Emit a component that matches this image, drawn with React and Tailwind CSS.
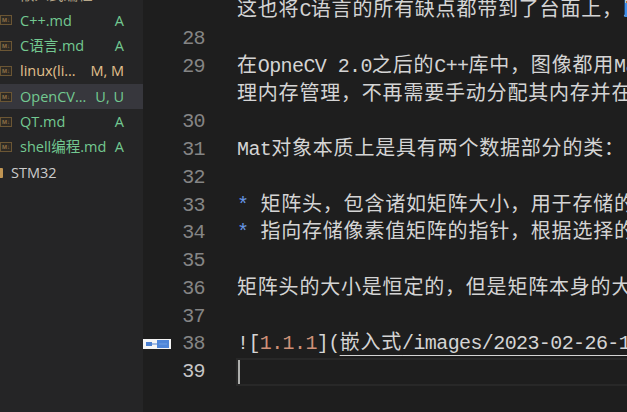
import React from "react";

const CJK = /([\u2E80-\u9FFF\u3000-\u303F\uFF00-\uFFEF]+)/;

function T({ s }) {
  const parts = s.split(CJK).filter((p) => p.length > 0);
  return (
    <>
      {parts.map((p, i) =>
        CJK.test(p) ? (
          <span key={i} className="tracking-[0.8px]">{p}</span>
        ) : (
          <span key={i} className="tracking-[-0.6px] whitespace-pre">
            {p}
          </span>
        )
      )}
    </>
  );
}

function MdIcon() {
  return (
    <span className="flex h-[10px] w-[12px] shrink-0 items-center justify-center border border-[#6b5634] bg-[#2e2a24] text-[6px] leading-none font-bold text-[#8d7046] font-['Liberation_Sans',sans-serif]">
      M↓
    </span>
  );
}

function FileRow({ name, badge, color, selected }) {
  return (
    <div
      className={
        "flex h-[25.4px] items-center pr-[19px] " +
        (selected ? "bg-[#37373d]" : "")
      }
    >
      <MdIcon />
      <span className="ml-[8px] min-w-0 flex-1 truncate" style={{ color }}>
        {name}
      </span>
      <span className="ml-[6px] shrink-0" style={{ color }}>
        {badge}
      </span>
    </div>
  );
}

function Line({ num, children, active, icon }) {
  return (
    <div className="flex h-[27.75px] items-center">
      <div
        className={
          "relative w-[62px] shrink-0 text-right tracking-[-0.6px] " +
          (active ? "text-[#c6c6c6]" : "text-[#858585]")
        }
      >
        {icon && (
          <div className="absolute left-0 top-1/2 h-[10px] w-[28px] -translate-y-1/2">
            <svg width="28" height="10" viewBox="0 0 28 10">
              <rect x="0" y="0" width="28" height="10" fill="#f4f4f4" />
              <rect x="3" y="3" width="6" height="4" fill="#4a7fd0" />
              <line x1="9" y1="5" x2="14" y2="5" stroke="#4a7fd0" strokeWidth="1" />
              <rect x="14" y="1" width="12" height="8" fill="#4f86d9" />
              <line x1="16" y1="5" x2="24" y2="5" stroke="#7aa6e6" strokeWidth="0.8" />
            </svg>
          </div>
        )}
        {num}
      </div>
      <div className="ml-[32px] whitespace-nowrap text-[#d4d4d4]">{children}</div>
    </div>
  );
}

export default function App() {
  return (
    <div className="flex h-[412px] w-[627px] overflow-hidden bg-[#1e1e1e]">
      {/* Sidebar */}
      <aside className="w-[143px] shrink-0 overflow-hidden bg-[#252526] font-['Open_Sans','Noto_Sans_CJK_SC',sans-serif] text-[14.5px]">
        <div className="mt-[-17.7px] flex flex-col">
          <FileRow name="嵌入式编程.md" badge="A" color="#b8a88a" />
          <FileRow name="C++.md" badge="A" color="#73c991" />
          <FileRow name="C语言.md" badge="A" color="#73c991" />
          <FileRow name="linux(lin…" badge="M, M" color="#e2c08d" />
          <FileRow name="OpenCV.…" badge="U, U" color="#73c991" selected />
          <FileRow name="QT.md" badge="A" color="#73c991" />
          <FileRow name="shell编程.md" badge="A" color="#73c991" />
          <div className="flex h-[25.4px] items-center">
            <span className="ml-[-9px] h-[10px] w-[12px] shrink-0 rounded-[1px] bg-[#c09553]" />
            <span className="ml-[8px] text-[#cccccc]">STM32</span>
          </div>
        </div>
      </aside>

      {/* Editor */}
      <main className="relative min-w-0 flex-1 overflow-hidden font-['Liberation_Mono','Noto_Sans_CJK_SC',monospace] text-[20px]">
        <div className="mt-[-2.6px] flex flex-col">
          <Line num="">
            <T s="这也将C语言的所有缺点都带到了台面上，即必须手动管理内存。" />
          </Line>
          <Line num="28" />
          <Line num="29">
            <T s="在OpneCV 2.0之后的C++库中，图像都用Mat类来存储，Mat类可以自动管" />
          </Line>
          <Line num="">
            <T s="理内存管理，不再需要手动分配其内存并在不需要时释放。" />
          </Line>
          <Line num="30" />
          <Line num="31">
            <T s="Mat对象本质上是具有两个数据部分的类：" />
          </Line>
          <Line num="32" />
          <Line num="33">
            <span className="text-[#6796e6]">*</span>
            <T s=" 矩阵头，包含诸如矩阵大小，用于存储的方法，矩阵存储的地址等信息；" />
          </Line>
          <Line num="34">
            <span className="text-[#6796e6]">*</span>
            <T s=" 指向存储像素值矩阵的指针，根据选择的存储方法包含像素值。" />
          </Line>
          <Line num="35" />
          <Line num="36">
            <T s="矩阵头的大小是恒定的，但是矩阵本身的大小因图像的不同而不同。" />
          </Line>
          <Line num="37" />
          <Line num="38" icon>
            <span className="tracking-[-0.6px]">![</span>
            <span className="tracking-[-0.6px] text-[#ce9178]">1.1.1</span>
            <span className="tracking-[-0.6px]">](</span>
            <span className="underline decoration-[#d4d4d4] decoration-1 underline-offset-[6px]">
              <T s="嵌入式/images/2023-02-26-15-30-12.png" />
            </span>
            <span className="tracking-[-0.6px]">)</span>
          </Line>
          <div className="flex h-[27.75px] items-stretch">
            <div className="flex w-[62px] shrink-0 items-center justify-end tracking-[-0.6px] text-[#c6c6c6]">
              39
            </div>
            <div className="relative ml-[31px] flex-1 border-y-2 border-l-2 border-[#282828]">
              <span className="absolute left-0 top-0 h-full w-[2px] bg-[#aeafad]" />
            </div>
          </div>
        </div>
        <span className="absolute right-0 top-[3px] h-[14px] w-[2px] bg-[#3b8eea]" />
      </main>
    </div>
  );
}
